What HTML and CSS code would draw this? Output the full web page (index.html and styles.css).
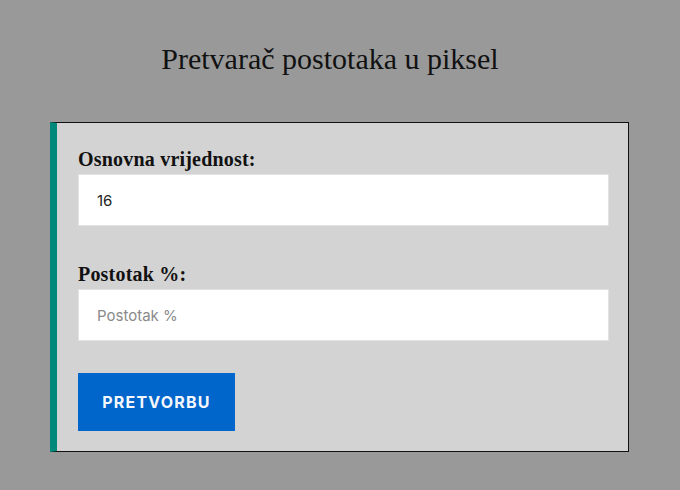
FILE: index.html
```html
<!DOCTYPE html>
<html lang="hr">
<head>
<meta charset="utf-8">
<title>Pretvarač postotaka u piksel</title>
<link rel="stylesheet" href="styles.css">
</head>
<body>
<h1 class="title">Pretvarač postotaka u piksel</h1>
<form class="card">
  <label class="label" for="base">Osnovna vrijednost:</label>
  <input class="field" id="base" type="text" value="16">
  <label class="label second" for="pct">Postotak %:</label>
  <input class="field" id="pct" type="text" placeholder="Postotak %">
  <button class="btn" type="button">PRETVORBU</button>
</form>
</body>
</html>
```
FILE: styles.css
```css
html, body {
  margin: 0;
  padding: 0;
  background: #999999;
}
body {
  padding-top: 42px;
}
.title {
  margin: 0 0 46px 0;
  padding-right: 20px;
  font-family: "Liberation Serif", "Times New Roman", serif;
  font-weight: normal;
  font-size: 30px;
  line-height: 34px;
  text-align: center;
  color: #111;
}
.card {
  display: flex;
  flex-direction: column;
  align-items: flex-start;
  box-sizing: border-box;
  width: 579px;
  margin-left: 50px;
  padding: 25px 19px 20px 21px;
  background: #d3d3d3;
  border: 1px solid #111;
  border-left: 7px solid #00897b;
}
.label {
  display: block;
  font-family: "Liberation Serif", "Times New Roman", serif;
  font-weight: bold;
  font-size: 20px;
  line-height: 22px;
  letter-spacing: 0.2px;
  color: #111;
  margin-bottom: 4px;
}
.label.second {
  margin-top: 37px;
}
.field {
  box-sizing: border-box;
  width: 100%;
  height: 52px;
  margin: 0;
  padding: 0 18px;
  border: 1px solid #e2e2e2;
  background: #fff;
  font-family: Inter, "Liberation Sans", sans-serif;
  font-size: 15px;
  color: #222;
  outline: none;
}
.field::placeholder {
  color: #8a8a8a;
}
.btn {
  margin-top: 32px;
  height: 58px;
  width: 157px;
  padding: 0;
  border: none;
  background: #0066cc;
  color: #f4f7fb;
  font-family: Inter, "Liberation Sans", sans-serif;
  font-weight: bold;
  font-size: 16px;
  letter-spacing: 1.2px;
  cursor: pointer;
}
```
